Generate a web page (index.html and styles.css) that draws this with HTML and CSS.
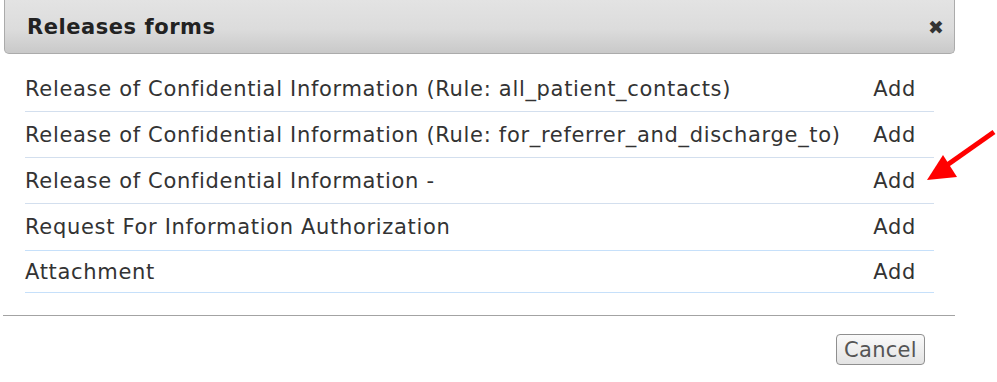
FILE: index.html
```html
<!DOCTYPE html>
<html lang="en">
<head>
    <meta charset="UTF-8">
    <meta name="viewport" content="width=device-width, initial-scale=1.0">
    <title>Releases forms</title>
    <link rel="stylesheet" href="styles.css">
</head>
<body>
    <div class="page">
        <!-- dialog -->
        <div class="dialog">
            <div class="dialog-header">
                <span class="dialog-title">Releases forms</span>
                <span class="dialog-close">&#10006;</span>
            </div>

            <div class="dialog-body">
                <table class="forms">
                    <tbody>
                        <tr>
                            <td>Release of Confidential Information (Rule: all_patient_contacts)</td>
                            <td class="action">Add</td>
                        </tr>
                        <tr>
                            <td>Release of Confidential Information (Rule: for_referrer_and_discharge_to)</td>
                            <td class="action">Add</td>
                        </tr>
                        <tr>
                            <td>Release of Confidential Information -</td>
                            <td class="action">Add</td>
                        </tr>
                        <tr class="blue">
                            <td>Request For Information Authorization</td>
                            <td class="action">Add</td>
                        </tr>
                        <tr class="blue last">
                            <td>Attachment</td>
                            <td class="action">Add</td>
                        </tr>
                    </tbody>
                </table>
            </div>

            <div class="dialog-footer">
                <button class="btn">Cancel</button>
            </div>
        </div>

        <!-- annotation arrow -->
        <svg class="arrow" width="80" height="62" viewBox="0 0 80 62">
            <line x1="74" y1="4" x2="20" y2="42" stroke="#f00" stroke-width="5"/>
            <polygon points="7,52 23,27 37,49" fill="#f00"/>
        </svg>
    </div>
</body>
</html>
```

FILE: styles.css
```css
body {
    margin: 0;
    font-family: "DejaVu Sans", Verdana, sans-serif;
    color: #333;
    background: #fff;
}
.page {
    position: relative;
    width: 997px;
    height: 382px;
    overflow: hidden;
}
.dialog {
    width: 952px;
    margin-left: 3px;
}
.dialog-header {
    height: 53px;
    margin-left: 1px;
    border: 1px solid #ababab;
    border-top: none;
    border-radius: 0 0 5px 5px;
    background: linear-gradient(#e3e3e3, #dcdcdc 55%, #c9c9c9);
    display: flex;
    align-items: center;
    justify-content: space-between;
    padding: 0 10px 0 22px;
}
.dialog-title {
    font-size: 21px;
    font-weight: bold;
    letter-spacing: 0.55px;
    color: #222;
}
.dialog-close {
    font-size: 19px;
    line-height: 1;
    color: #333;
    margin-top: 2px;
}
.dialog-body {
    padding: 12px 21px 22px 22px;
}
.forms {
    width: 100%;
    border-collapse: collapse;
    font-size: 21px;
    letter-spacing: 0.68px;
}
.forms td {
    height: 45px;
    padding: 0;
    border-bottom: 1px solid #d3dfee;
    vertical-align: middle;
    white-space: nowrap;
}
.forms tr.blue td {
    height: 46px;
    border-bottom-color: #c6e0fa;
}
.forms tr.last td {
    height: 41px;
}
.forms td.action {
    width: 60px;
    text-align: right;
    padding-right: 18px;
}
.dialog-footer {
    border-top: 1px solid #a3a3a3;
    padding: 18px 30px 16px 0;
    text-align: right;
}
.btn {
    width: 89px;
    height: 31px;
    font-family: inherit;
    font-size: 21px;
    letter-spacing: 0.3px;
    color: #555;
    background: linear-gradient(#fafafa, #e3e3e3);
    border: 1px solid #8f8f8f;
    border-radius: 4px;
    padding: 0;
}
.arrow {
    position: absolute;
    left: 920px;
    top: 128px;
}
```
